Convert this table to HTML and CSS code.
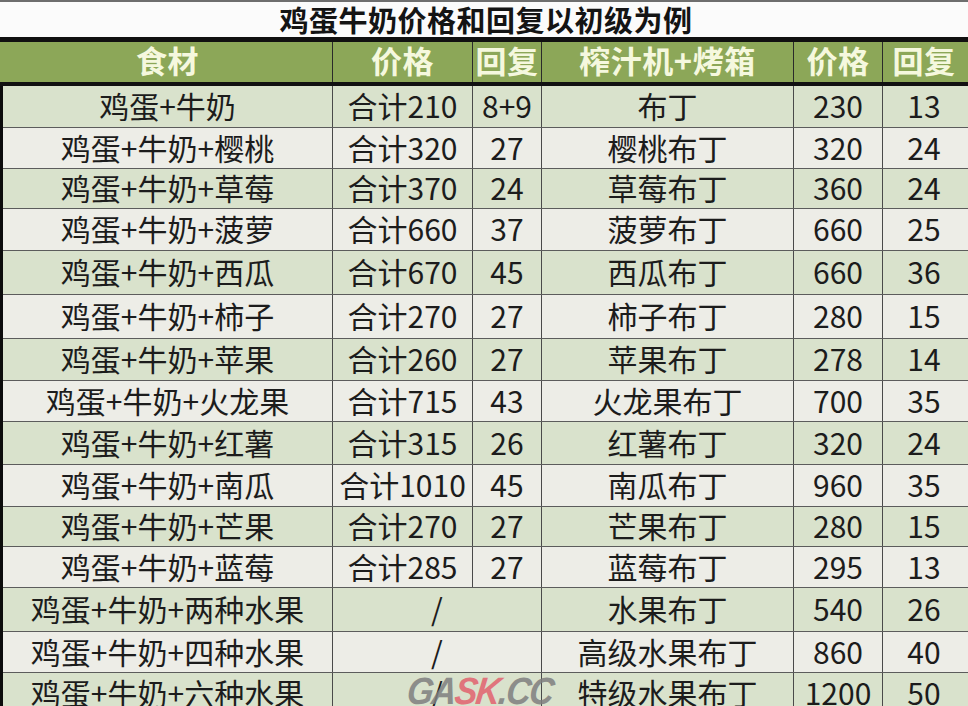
FILE: index.html
```html
<!DOCTYPE html>
<html lang="zh-CN">
<head>
<meta charset="utf-8">
<title>鸡蛋牛奶价格和回复以初级为例</title>
<link rel="stylesheet" href="styles.css">
</head>
<body>
<div class="page">
  <div class="title">鸡蛋牛奶价格和回复以初级为例</div>
  <div class="sheet">
    <div class="row head">
      <div class="cell">食材</div>
      <div class="cell">价格</div>
      <div class="cell">回复</div>
      <div class="cell">榨汁机+烤箱</div>
      <div class="cell">价格</div>
      <div class="cell">回复</div>
    </div>
    <div class="body">
      <div class="row g"><div class="cell">鸡蛋+牛奶</div><div class="cell">合计210</div><div class="cell">8+9</div><div class="cell">布丁</div><div class="cell">230</div><div class="cell">13</div></div>
      <div class="row w"><div class="cell">鸡蛋+牛奶+樱桃</div><div class="cell">合计320</div><div class="cell">27</div><div class="cell">樱桃布丁</div><div class="cell">320</div><div class="cell">24</div></div>
      <div class="row g"><div class="cell">鸡蛋+牛奶+草莓</div><div class="cell">合计370</div><div class="cell">24</div><div class="cell">草莓布丁</div><div class="cell">360</div><div class="cell">24</div></div>
      <div class="row w"><div class="cell">鸡蛋+牛奶+菠萝</div><div class="cell">合计660</div><div class="cell">37</div><div class="cell">菠萝布丁</div><div class="cell">660</div><div class="cell">25</div></div>
      <div class="row g"><div class="cell">鸡蛋+牛奶+西瓜</div><div class="cell">合计670</div><div class="cell">45</div><div class="cell">西瓜布丁</div><div class="cell">660</div><div class="cell">36</div></div>
      <div class="row w"><div class="cell">鸡蛋+牛奶+柿子</div><div class="cell">合计270</div><div class="cell">27</div><div class="cell">柿子布丁</div><div class="cell">280</div><div class="cell">15</div></div>
      <div class="row g"><div class="cell">鸡蛋+牛奶+苹果</div><div class="cell">合计260</div><div class="cell">27</div><div class="cell">苹果布丁</div><div class="cell">278</div><div class="cell">14</div></div>
      <div class="row w"><div class="cell">鸡蛋+牛奶+火龙果</div><div class="cell">合计715</div><div class="cell">43</div><div class="cell">火龙果布丁</div><div class="cell">700</div><div class="cell">35</div></div>
      <div class="row g"><div class="cell">鸡蛋+牛奶+红薯</div><div class="cell">合计315</div><div class="cell">26</div><div class="cell">红薯布丁</div><div class="cell">320</div><div class="cell">24</div></div>
      <div class="row w"><div class="cell">鸡蛋+牛奶+南瓜</div><div class="cell">合计1010</div><div class="cell">45</div><div class="cell">南瓜布丁</div><div class="cell">960</div><div class="cell">35</div></div>
      <div class="row g"><div class="cell">鸡蛋+牛奶+芒果</div><div class="cell">合计270</div><div class="cell">27</div><div class="cell">芒果布丁</div><div class="cell">280</div><div class="cell">15</div></div>
      <div class="row w"><div class="cell">鸡蛋+牛奶+蓝莓</div><div class="cell">合计285</div><div class="cell">27</div><div class="cell">蓝莓布丁</div><div class="cell">295</div><div class="cell">13</div></div>
      <div class="row g"><div class="cell">鸡蛋+牛奶+两种水果</div><div class="cell span2">/</div><div class="cell">水果布丁</div><div class="cell">540</div><div class="cell">26</div></div>
      <div class="row w"><div class="cell">鸡蛋+牛奶+四种水果</div><div class="cell span2">/</div><div class="cell">高级水果布丁</div><div class="cell">860</div><div class="cell">40</div></div>
      <div class="row g"><div class="cell">鸡蛋+牛奶+六种水果</div><div class="cell span2">/</div><div class="cell">特级水果布丁</div><div class="cell">1200</div><div class="cell">50</div></div>
    </div>
  </div>
  <div class="watermark"><span class="wm-gray">GA</span><span class="wm-red">SK</span><span class="wm-gray">.CC</span></div>
</div>
</body>
</html>
```
FILE: styles.css
```css
* { box-sizing: border-box; }
html, body { margin: 0; padding: 0; }
body {
  width: 968px;
  height: 706px;
  overflow: hidden;
  background: #ffffff;
  font-family: "Noto Sans CJK SC", "Noto Sans", sans-serif;
}
.page {
  position: relative;
  width: 968px;
  height: 706px;
  overflow: hidden;
}
.title {
  height: 37px;
  border-top: 2px solid #6e6e6e;
  background: #fbfbfb;
  font-size: 29px;
  line-height: 1.2;
  font-weight: 700;
  color: #141414;
  display: flex;
  align-items: center;
  justify-content: center;
  padding-left: 4px;
  letter-spacing: 0.5px;
}
.sheet {
  border-left: 3px solid #0c0c0c;
}
.row {
  display: grid;
  grid-template-columns: 330px 140px 69px 252px 89px 82px;
}
.cell {
  display: flex;
  align-items: center;
  justify-content: center;
  border-right: 1px solid #4a4a4a;
  white-space: nowrap;
  font-size: 30px;
  line-height: 1.15;
  color: #1c1c1c;
  padding-bottom: 2px;
}
.cell:last-child { border-right: none; }
.span2 { grid-column: span 2; }
.head {
  height: 49px;
  border-top: 5px solid #111;
  border-bottom: 4px solid #111;
  background: #8ca758;
  margin-left: -3px;
  padding-left: 3px;
}
.head .cell {
  font-size: 31px;
  font-weight: 700;
  color: #f5f8de;
  border-right-color: #2a2a2a;
  letter-spacing: 0.5px;
  padding-bottom: 4px;
}
.body {
  display: grid;
  grid-template-rows: 42px 41px 40px 42px 44px 44px 42px 41px 43px 42px 40px 41px 44px 41px 42px;
}
.row.g, .row.w { border-bottom: 1px solid #5c5c5c; }
.g { background: #d9e2cc; }
.w { background: #edede7; }
.watermark {
  position: absolute;
  left: 410px;
  top: 670px;
  font-family: "Liberation Sans", Arial, sans-serif;
  font-weight: 700;
  font-style: italic;
  font-size: 38px;
  line-height: 1.15;
  letter-spacing: -2px;
  transform: scaleX(0.9) skewX(-8deg);
  transform-origin: left top;
  opacity: 0.85;
}
.wm-gray { color: #7f7f7f; }
.wm-red { color: #e2636f; }
```
